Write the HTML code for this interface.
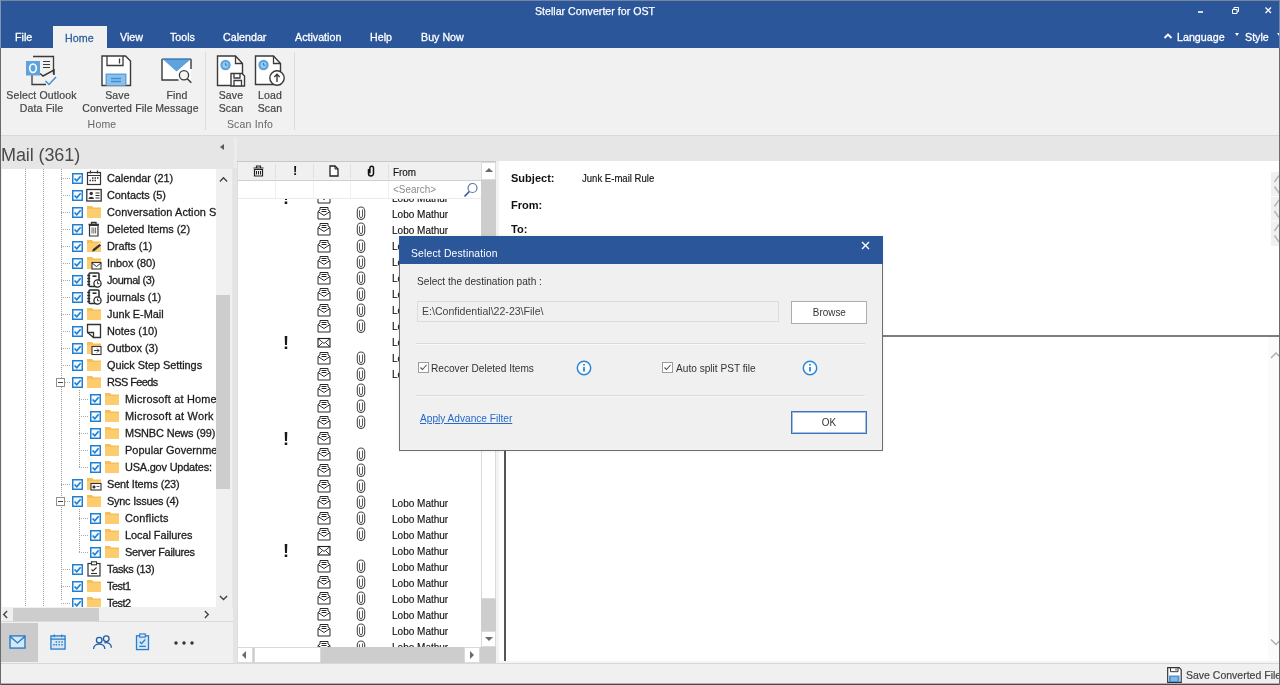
<!DOCTYPE html>
<html lang="en">
<head>
<meta charset="utf-8">
<title>Stellar Converter for OST</title>
<style>
*{box-sizing:border-box;margin:0;padding:0}
html,body{width:1280px;height:685px;overflow:hidden;background:#f0f0f0}
#app{will-change:transform}
body{font-family:"Liberation Sans","DejaVu Sans",sans-serif;font-size:12px;color:#222;position:relative}
.abs{position:absolute}
#app{position:absolute;left:0;top:0;width:1280px;height:685px;overflow:hidden;background:#e6e6e6}
/* title */
#title{position:absolute;left:0;top:0;width:1280px;height:48px;background:#2b569a;border-top:1px solid #76849c}
#title .cap{-webkit-text-stroke:.25px;position:absolute;left:0;width:1190px;top:3px;text-align:center;color:#fff;font-size:11.5px;line-height:14px;transform:scaleX(.925);transform-origin:595px 0}
.mtab{position:absolute;top:25px;height:23px;line-height:23px;color:#fff;font-size:11.500px;white-space:nowrap;transform:scaleX(.93);transform-origin:0 0;-webkit-text-stroke:.3px}
.mtab.sel{background:#f1f1f1;color:#30609f;text-align:center;transform:none}
.mtab.sel span{display:inline-block;transform:scaleX(.93)}
/* ribbon */
#ribbon{position:absolute;left:0;top:48px;width:1280px;height:88px;background:#f1f1f1;border-bottom:1px solid #d9d9d9}
.rsep{position:absolute;top:4px;height:78px;width:1px;background:#dcdcdc}
.rlab{position:absolute;text-align:center;color:#444;font-size:10.500px;line-height:12.500px;white-space:nowrap;letter-spacing:.15px;-webkit-text-stroke:.2px}
.rgrp{position:absolute;text-align:center;color:#666;font-size:10.500px;line-height:12px;top:70px;letter-spacing:.2px}
.ric{position:absolute}
/* left pane */
#lhead{position:absolute;left:0;top:136px;width:233px;height:33px;background:#e6e6e6}
#lhead .t{position:absolute;left:1px;top:6.500px;font-size:18px;line-height:24px;color:#4a4a4a;letter-spacing:-.1px}
#tree{position:absolute;left:2px;top:169px;width:214px;height:437.500px;background:#fff;overflow:hidden}
.vl{position:absolute;top:0;width:1px;height:438px;background-image:linear-gradient(#9a9a9a 50%,transparent 50%);background-size:1px 2px}
.tr{position:absolute;left:0;width:214px;height:17px}
.tr .hl{position:absolute;top:9px;height:1px;background-image:linear-gradient(90deg,#a8a8a8 50%,transparent 50%);background-size:2px 1px}
.tr .ex{position:absolute;top:5px;width:9px;height:9px;border:1px solid #919191;background:#fff}
.tr .ex:after{content:"";position:absolute;left:1px;top:3px;width:5px;height:1px;background:#444}
.cbw{position:absolute;top:4px;width:11px;height:11px}
.cb{width:11px;height:11px;display:block}
.tiw{position:absolute;top:1px;width:16px;height:16px}
.ti{width:16px;height:16px;display:block}
.tx{position:absolute;top:.5px;font-size:11.500px;line-height:16px;color:#1c1c1c;white-space:nowrap;letter-spacing:-.05px;-webkit-text-stroke:.3px;transform:scaleX(.95);transform-origin:0 0}
#tvs{position:absolute;left:216px;top:169px;width:16px;height:438px;background:#f0f0f0}
#tvs .th{position:absolute;left:0;top:126px;width:14px;height:194px;background:#cdcdcd}
#ths{position:absolute;left:2px;top:606.500px;width:214px;height:14.500px;background:#f0f0f0}
#ths .th{position:absolute;left:11px;top:1px;width:86px;height:13px;background:#cdcdcd}
.chev{position:absolute;font-size:0}
#nav{position:absolute;left:0;top:621px;width:233px;height:42px;background:#f0f0f0;border-top:1px solid #d9d9d9}
#nav .sel{position:absolute;left:1px;top:1px;width:37px;height:39px;background:#cbcbcb}
/* list */
#list{position:absolute;left:237px;top:162px;width:259px;height:501px;background:#fff;overflow:hidden;z-index:0}
#lhdr{position:absolute;left:0;top:0;width:244px;height:19px;background:#f0f0f0;border-bottom:1px solid #cfcfcf;z-index:3}
#lhdr i{position:absolute;top:2px;width:1px;height:14px;background:#e0e0e0}
#lsearch{position:absolute;left:0;top:19px;width:244px;height:18px;background:#fff;border-bottom:1px solid #ebebeb;z-index:3}
#lsearch i{position:absolute;top:0;width:1px;height:17px;background:#f0f0f0}
.lr{position:absolute;left:0;width:244px;height:16px}
.le{position:absolute;left:80px;top:1px;width:14px;height:14px}
.lc{position:absolute;left:119px;top:1px;width:10px;height:14px}
.ln{position:absolute;left:155px;top:.5px;line-height:16px;font-size:11px;color:#111;white-space:nowrap;transform:scaleX(.91);transform-origin:0 0;-webkit-text-stroke:.15px}
.bang{position:absolute;left:46px;top:1px;font-size:18px;line-height:16px;color:#1a1a1a;font-weight:bold}
#lvs{position:absolute;left:244px;top:0;width:15px;height:501px;background:#cdcdcd;z-index:4}
#lvs .b{position:absolute;left:0;width:15px;height:17px;background:#fff;border:1px solid #dadada}
#lvs .th{position:absolute;left:0;top:81px;width:15px;height:356px;background:#fff;border:1px solid #dadada}
#lhs{position:absolute;left:0;top:485px;width:244px;height:16px;background:#cdcdcd;z-index:4}
#lhs .b{position:absolute;top:0;width:16px;height:16px;background:#fff;border:1px solid #dadada}
#lhs .th{position:absolute;left:17px;top:0;width:67px;height:16px;background:#fff;border:1px solid #dadada}
.tri{position:absolute;width:0;height:0;border:4px solid transparent}
/* preview */
#pv{position:absolute;left:499px;top:161px;width:781px;height:500px;background:#fff;overflow:hidden}
#pv .lbl{position:absolute;left:12px;font-weight:bold;font-size:11.500px;color:#111;line-height:14px;transform:scaleX(.96);transform-origin:0 0}
#pv .val{position:absolute;left:83px;font-size:10.500px;color:#111;line-height:14px;-webkit-text-stroke:.15px;transform:scaleX(.91);transform-origin:0 0;white-space:nowrap}
#pvdiv{position:absolute;left:0;top:174px;width:781px;height:2px;background:#7d7d7d}
#pvl{position:absolute;left:5px;top:176px;width:2px;height:324px;background:#555}
/* status */
#status{position:absolute;left:0;top:663px;width:1280px;height:22px;background:#f0f0f0;border-top:1px solid #d8d8d8;border-bottom:1px solid #4a4a4a;box-shadow:inset 0 -1px 0 #b0b0b0}
#status .t{position:absolute;left:1186px;top:4px;font-size:10.500px;line-height:14px;color:#444;white-space:nowrap;-webkit-text-stroke:.2px}
/* dialog */
#dlg{z-index:10;position:absolute;left:399px;top:236px;width:484px;height:215px;background:#f0f0f0;border:1px solid #6e6e6e;border-top:none;box-shadow:0 0 3px rgba(0,0,0,.08)}
#dlg .tb{position:absolute;left:-1px;top:0;width:484px;height:28px;background:#2b569a}
#dlg .tb .t{position:absolute;left:12px;top:10px;color:#fff;font-size:11.500px;line-height:14px;letter-spacing:.2px;transform:scaleX(.9);transform-origin:0 0}
#dlg .x{position:absolute;left:462px;top:5px;width:9px;height:9px}
.dt{position:absolute;font-size:11px;line-height:14px;color:#333;white-space:nowrap;transform:scaleX(.92);transform-origin:0 0}
.btn{position:absolute;background:#fff;border:1px solid #adadad;text-align:center;font-size:11px;color:#333;line-height:21px}
.btn span{display:inline-block;transform:scaleX(.9)}
.dsep{position:absolute;left:16px;width:449px;height:1px;background:#dadada;border-bottom:1px solid #fafafa;box-sizing:content-box}
.dcb{position:absolute;width:11px;height:11px;border:1px solid #9c9c9c;background:#fdfdfd}
.info{position:absolute;width:16px;height:16px}
</style>
</head>
<body>
<div id="app">

<!-- ===== title bar ===== -->
<div id="title">
  <div class="cap">Stellar Converter for OST</div>
  <svg class="abs" style="left:1196px;top:4px" width="80" height="16" viewBox="0 0 80 16">
    <path d="M2 7h5" stroke="#fff" stroke-width="1.600"/>
    <path d="M36.500 4.500h4.500v4h-4.500zM38 4.500V2.500h4.500v4H41" fill="none" stroke="#fff" stroke-width="1"/>
    <path d="M69.500 2.500l5.500 5.500M75 2.500L69.500 8" stroke="#fff" stroke-width="1.300"/>
  </svg>
  <div class="mtab" style="left:15px">File</div>
  <div class="mtab sel" style="left:52.500px;width:54.500px;top:24.500px;height:23.500px;line-height:24px"><span>Home</span></div>
  <div class="mtab" style="left:120px">View</div>
  <div class="mtab" style="left:170px">Tools</div>
  <div class="mtab" style="left:223px">Calendar</div>
  <div class="mtab" style="left:295px">Activation</div>
  <div class="mtab" style="left:370px">Help</div>
  <div class="mtab" style="left:421px">Buy Now</div>
  <svg class="abs" style="left:1163px;top:31px" width="10" height="8" viewBox="0 0 10 8"><path d="M1.500 6l3.500-3.500L8.500 6" fill="none" stroke="#fff" stroke-width="1.800"/></svg>
  <div class="mtab" style="left:1177px">Language</div>
  <i class="tri" style="left:1234.500px;top:32px;border-width:3px 2.500px 0 2.500px;border-top-color:#fff"></i>
  <div class="mtab" style="left:1245px">Style</div>
  <i class="tri" style="left:1276.500px;top:32px;border-width:3px 2.500px 0 2.500px;border-top-color:#fff"></i>
</div>

<!-- ===== ribbon ===== -->
<div id="ribbon">
  <i class="rsep" style="left:205px"></i>
  <i class="rsep" style="left:294px"></i>

  <!-- Select Outlook Data File icon -->
  <svg class="ric" style="left:25px;top:7px" width="32" height="32" viewBox="0 0 32 32">
    <path d="M8 1.500h20.500v18" fill="none" stroke="#3a3a3a" stroke-width="1.300"/>
    <path d="M7 20v9.500h14" fill="none" stroke="#3a3a3a" stroke-width="1.300"/>
    <path d="M18 6.500h7M18 9.500h7M18 12.500h7" stroke="#3a3a3a" stroke-width="1.200"/>
    <path d="M15 18.500l3 2.500 11-6v5" fill="none" stroke="#3a3a3a" stroke-width="1.500"/>
    <rect x="1" y="6" width="14" height="14.500" fill="#5ea3dc"/>
    <ellipse cx="8" cy="13.200" rx="3.300" ry="4.200" fill="none" stroke="#fff" stroke-width="1.600"/>
    <path d="M20.500 26l3.500 3.500 7-7.500" fill="none" stroke="#3f8fd2" stroke-width="1.500"/>
  </svg>
  <div class="rlab" style="left:0;top:41px;width:83px">Select Outlook<br>Data File</div>

  <!-- Save Converted File icon -->
  <svg class="ric" style="left:101px;top:7px" width="31" height="32" viewBox="0 0 31 32">
    <path d="M1 1h23.500l5 5v24.500H1z" fill="#fff" stroke="#3a3a3a" stroke-width="1.400"/>
    <path d="M6 1v9.500h16V1" fill="none" stroke="#3a3a3a" stroke-width="1.300"/>
    <path d="M18.500 3.500v5" stroke="#3a3a3a" stroke-width="1.300"/>
    <rect x="4.500" y="18.500" width="21" height="12" fill="#5ea3dc"/>
    <rect x="6" y="20" width="18" height="10.500" fill="#8cc0ea"/>
    <path d="M10 23.500h10M10 26.500h10" stroke="#3f8fd2" stroke-width="1.300"/>
  </svg>
  <div class="rlab" style="left:76px;top:41px;width:83px">Save<br>Converted File</div>

  <!-- Find Message icon -->
  <svg class="ric" style="left:161px;top:9px" width="33" height="28" viewBox="0 0 33 28">
    <path d="M1 2h29v21H1z" fill="#fff"/>
    <path d="M1.500 2l14 12.500L30 2z" fill="#5ea3dc"/>
    <path d="M30 2v10M1 2v21h16.500" fill="none" stroke="#3a3a3a" stroke-width="1.400"/>
    <path d="M1 2h29" stroke="#3a76b4" stroke-width="1.400"/>
    <circle cx="23" cy="18.300" r="4.600" fill="#f6f6f6" stroke="#3a3a3a" stroke-width="1.300"/>
    <path d="M26.300 21.800l4 4" stroke="#3a3a3a" stroke-width="1.500"/>
  </svg>
  <div class="rlab" style="left:152px;top:41px;width:50px">Find<br>Message</div>

  <!-- Save Scan icon -->
  <svg class="ric" style="left:216px;top:7px" width="30" height="32" viewBox="0 0 30 32">
    <path d="M1.500 1h18l7 7.500V30.500H1.500z" fill="#fff" stroke="#3a3a3a" stroke-width="1.400"/>
    <path d="M19.500 1v7.500h7" fill="none" stroke="#3a3a3a" stroke-width="1.300"/>
    <circle cx="9.500" cy="10" r="5.200" fill="#5ea3dc"/>
    <circle cx="9.500" cy="10" r="3" fill="#9accf0"/>
    <path d="M9.500 8v2.200h2" fill="none" stroke="#2f7cc0" stroke-width="1"/>
    <path d="M15 18.500h11l2.500 2.500V31H15z" fill="#fff" stroke="#3a3a3a" stroke-width="1.400"/>
    <path d="M18 18.500v4.500h6v-4.500M18 31v-5.500h7.500V31" fill="none" stroke="#3a3a3a" stroke-width="1.300"/>
  </svg>
  <div class="rlab" style="left:213px;top:41px;width:36px">Save<br>Scan</div>

  <!-- Load Scan icon -->
  <svg class="ric" style="left:254px;top:7px" width="32" height="32" viewBox="0 0 32 32">
    <path d="M1.500 1h18l7 7.500V29.500H1.500z" fill="#fff" stroke="#3a3a3a" stroke-width="1.400"/>
    <path d="M19.500 1v7.500h7" fill="none" stroke="#3a3a3a" stroke-width="1.300"/>
    <circle cx="9.500" cy="10" r="5.200" fill="#5ea3dc"/>
    <circle cx="9.500" cy="10" r="3" fill="#9accf0"/>
    <path d="M9.500 8v2.200h2" fill="none" stroke="#2f7cc0" stroke-width="1"/>
    <circle cx="23" cy="23" r="7.200" fill="#fff" stroke="#3a3a3a" stroke-width="1.400"/>
    <path d="M23 27v-7.500M20.300 22l2.700-2.700 2.700 2.700" fill="none" stroke="#3a3a3a" stroke-width="1.400"/>
  </svg>
  <div class="rlab" style="left:252px;top:41px;width:36px">Load<br>Scan</div>

  <div class="rgrp" style="left:72px;width:60px">Home</div>
  <div class="rgrp" style="left:215px;width:70px">Scan Info</div>
</div>

<!-- ===== left pane ===== -->
<div id="lhead"><div class="t">Mail (361)</div>
  <i class="tri" style="left:220px;top:8px;border-width:3.500px 4px 3.500px 0;border-right-color:#5a5a5a"></i>
</div>
<div class="abs" style="left:0;top:169px;width:2px;height:494px;background:#f0f0f0"></div>
<div id="tree">
  <i class="vl" style="left:23px"></i>
  <i class="vl" style="left:41px"></i>
  <i class="vl" style="left:59px;height:432px"></i>
  <i class="vl" style="left:77px;top:221px;height:77px"></i>
  <i class="vl" style="left:77px;top:340px;height:43px"></i>
<div class="tr" style="top:0px"><i class="hl" style="left:59px;width:10px"></i><span style="left:70px" class="cbw"><svg class="cb" viewBox="0 0 12 12"><rect x="0.800" y="0.800" width="10.400" height="10.400" fill="#f4faff" stroke="#1e7fd0" stroke-width="1.600"/><path d="M2.800 6l2.400 2.500 4.200-5" fill="none" stroke="#1e7fd0" stroke-width="1.800"/></svg></span><span style="left:84px" class="tiw"><svg class="ti" viewBox="0 0 16 16"><rect x="1.5" y="2.5" width="13" height="12" fill="#fff" stroke="#333" stroke-width="1.2"/><path d="M4.5 0.5v3M11.5 0.5v3" stroke="#333" stroke-width="1.2"/><path d="M1.5 5.5h13" stroke="#333" stroke-width="1"/><path d="M6 8h1.5M8.5 8H10M11 8h1.5M3.500 10.500h1.5M6 10.500h1.5M8.500 10.500H10" stroke="#333" stroke-width="1.4"/></svg></span><span class="tx" style="left:105px">Calendar (21)</span></div>
<div class="tr" style="top:17px"><i class="hl" style="left:59px;width:10px"></i><span style="left:70px" class="cbw"><svg class="cb" viewBox="0 0 12 12"><rect x="0.800" y="0.800" width="10.400" height="10.400" fill="#f4faff" stroke="#1e7fd0" stroke-width="1.600"/><path d="M2.800 6l2.400 2.500 4.200-5" fill="none" stroke="#1e7fd0" stroke-width="1.800"/></svg></span><span style="left:84px" class="tiw"><svg class="ti" viewBox="0 0 16 16"><rect x="0.800" y="2.500" width="14.400" height="11.500" fill="#fff" stroke="#333" stroke-width="1.300"/><circle cx="5.200" cy="6.500" r="1.700" fill="#333"/><path d="M2.500 12c0-3 5.400-3 5.400 0z" fill="#333"/><path d="M9.500 6h4M9.500 8.500h4M9.500 11h4" stroke="#333" stroke-width="1.100"/></svg></span><span class="tx" style="left:105px">Contacts (5)</span></div>
<div class="tr" style="top:34px"><i class="hl" style="left:59px;width:10px"></i><span style="left:70px" class="cbw"><svg class="cb" viewBox="0 0 12 12"><rect x="0.800" y="0.800" width="10.400" height="10.400" fill="#f4faff" stroke="#1e7fd0" stroke-width="1.600"/><path d="M2.800 6l2.400 2.500 4.200-5" fill="none" stroke="#1e7fd0" stroke-width="1.800"/></svg></span><span style="left:84px" class="tiw"><svg class="ti" viewBox="0 0 16 16"><path d="M1 2h5l1.5 1.5H15V14H1z" fill="#f6bf58"/><path d="M1 5h14v9H1z" fill="#fccc6e"/></svg></span><span class="tx" style="left:105px;letter-spacing:0.10px">Conversation Action Settings</span></div>
<div class="tr" style="top:51px"><i class="hl" style="left:59px;width:10px"></i><span style="left:70px" class="cbw"><svg class="cb" viewBox="0 0 12 12"><rect x="0.800" y="0.800" width="10.400" height="10.400" fill="#f4faff" stroke="#1e7fd0" stroke-width="1.600"/><path d="M2.800 6l2.400 2.500 4.200-5" fill="none" stroke="#1e7fd0" stroke-width="1.800"/></svg></span><span style="left:84px" class="tiw"><svg class="ti" viewBox="0 0 16 16"><path d="M3.500 4.500h8.500v10.500H3.500z" fill="#fff" stroke="#333" stroke-width="1.200"/><path d="M2.500 3.500h10.500M5.500 3.500V1.500h4.500v2" fill="none" stroke="#333" stroke-width="1.300"/><path d="M6 6.500v6M7.800 6.500v6M9.600 6.500v6" stroke="#444" stroke-width="0.800"/></svg></span><span class="tx" style="left:105px">Deleted Items (2)</span></div>
<div class="tr" style="top:68px"><i class="hl" style="left:59px;width:10px"></i><span style="left:70px" class="cbw"><svg class="cb" viewBox="0 0 12 12"><rect x="0.800" y="0.800" width="10.400" height="10.400" fill="#f4faff" stroke="#1e7fd0" stroke-width="1.600"/><path d="M2.800 6l2.400 2.500 4.200-5" fill="none" stroke="#1e7fd0" stroke-width="1.800"/></svg></span><span style="left:84px" class="tiw"><svg class="ti" viewBox="0 0 16 16"><path d="M1 2h5l1.500 1.500H15V14H1z" fill="#f6bf58"/><path d="M1 5h14v9H1z" fill="#fccc6e"/><path d="M6 13.500l1-2.500 6.500-5 1.500 1.500-6.500 5.500z" fill="#333"/><path d="M11.500 6.500l2-2 1.500 1.500" fill="none" stroke="#fff" stroke-width="0.600"/></svg></span><span class="tx" style="left:105px">Drafts (1)</span></div>
<div class="tr" style="top:85px"><i class="hl" style="left:59px;width:10px"></i><span style="left:70px" class="cbw"><svg class="cb" viewBox="0 0 12 12"><rect x="0.800" y="0.800" width="10.400" height="10.400" fill="#f4faff" stroke="#1e7fd0" stroke-width="1.600"/><path d="M2.800 6l2.400 2.500 4.200-5" fill="none" stroke="#1e7fd0" stroke-width="1.800"/></svg></span><span style="left:84px" class="tiw"><svg class="ti" viewBox="0 0 16 16"><path d="M1 2h5l1.500 1.500H15V14H1z" fill="#f6bf58"/><path d="M1 5h14v9H1z" fill="#fccc6e"/><rect x="6" y="7.500" width="9" height="6.500" fill="#fff" stroke="#333" stroke-width="1.100"/><path d="M6 8l4.500 3.500L15 8" fill="none" stroke="#333" stroke-width="1"/></svg></span><span class="tx" style="left:105px">Inbox (80)</span></div>
<div class="tr" style="top:102px"><i class="hl" style="left:59px;width:10px"></i><span style="left:70px" class="cbw"><svg class="cb" viewBox="0 0 12 12"><rect x="0.800" y="0.800" width="10.400" height="10.400" fill="#f4faff" stroke="#1e7fd0" stroke-width="1.600"/><path d="M2.800 6l2.400 2.500 4.200-5" fill="none" stroke="#1e7fd0" stroke-width="1.800"/></svg></span><span style="left:84px" class="tiw"><svg class="ti" viewBox="0 0 16 16"><rect x="3" y="1" width="10" height="13.500" rx="1" fill="#fff" stroke="#2a2a2a" stroke-width="1.500"/><path d="M1.200 3.500h3M1.200 6.500h3M1.200 9.500h3M1.200 12.500h3" stroke="#2a2a2a" stroke-width="1.300"/><path d="M6.500 4.200h4" stroke="#2a2a2a" stroke-width="1.600"/><circle cx="11.500" cy="11.500" r="3.600" fill="#fff" stroke="#2a2a2a" stroke-width="1.300"/><path d="M11.500 9.500v2.200h1.800" fill="none" stroke="#333" stroke-width="1"/></svg></span><span class="tx" style="left:105px;letter-spacing:-0.45px">Journal (3)</span></div>
<div class="tr" style="top:119px"><i class="hl" style="left:59px;width:10px"></i><span style="left:70px" class="cbw"><svg class="cb" viewBox="0 0 12 12"><rect x="0.800" y="0.800" width="10.400" height="10.400" fill="#f4faff" stroke="#1e7fd0" stroke-width="1.600"/><path d="M2.800 6l2.400 2.500 4.200-5" fill="none" stroke="#1e7fd0" stroke-width="1.800"/></svg></span><span style="left:84px" class="tiw"><svg class="ti" viewBox="0 0 16 16"><rect x="3" y="1" width="10" height="13.500" rx="1" fill="#fff" stroke="#2a2a2a" stroke-width="1.500"/><path d="M1.200 3.500h3M1.200 6.500h3M1.200 9.500h3M1.200 12.500h3" stroke="#2a2a2a" stroke-width="1.300"/><path d="M6.500 4.200h4" stroke="#2a2a2a" stroke-width="1.600"/><circle cx="11.500" cy="11.500" r="3.600" fill="#fff" stroke="#2a2a2a" stroke-width="1.300"/><path d="M11.500 9.500v2.200h1.800" fill="none" stroke="#333" stroke-width="1"/></svg></span><span class="tx" style="left:105px">journals (1)</span></div>
<div class="tr" style="top:136px"><i class="hl" style="left:59px;width:10px"></i><span style="left:70px" class="cbw"><svg class="cb" viewBox="0 0 12 12"><rect x="0.800" y="0.800" width="10.400" height="10.400" fill="#f4faff" stroke="#1e7fd0" stroke-width="1.600"/><path d="M2.800 6l2.400 2.500 4.200-5" fill="none" stroke="#1e7fd0" stroke-width="1.800"/></svg></span><span style="left:84px" class="tiw"><svg class="ti" viewBox="0 0 16 16"><path d="M1 2h5l1.5 1.5H15V14H1z" fill="#f6bf58"/><path d="M1 5h14v9H1z" fill="#fccc6e"/></svg></span><span class="tx" style="left:105px">Junk E-Mail</span></div>
<div class="tr" style="top:153px"><i class="hl" style="left:59px;width:10px"></i><span style="left:70px" class="cbw"><svg class="cb" viewBox="0 0 12 12"><rect x="0.800" y="0.800" width="10.400" height="10.400" fill="#f4faff" stroke="#1e7fd0" stroke-width="1.600"/><path d="M2.800 6l2.400 2.500 4.200-5" fill="none" stroke="#1e7fd0" stroke-width="1.800"/></svg></span><span style="left:84px" class="tiw"><svg class="ti" viewBox="0 0 16 16"><path d="M1.500 1.500h13v13h-7l-6-5z" fill="#fff" stroke="#333" stroke-width="1.300"/><path d="M1.500 9.500h6v5" fill="none" stroke="#333" stroke-width="1.300"/></svg></span><span class="tx" style="left:105px">Notes (10)</span></div>
<div class="tr" style="top:170px"><i class="hl" style="left:59px;width:10px"></i><span style="left:70px" class="cbw"><svg class="cb" viewBox="0 0 12 12"><rect x="0.800" y="0.800" width="10.400" height="10.400" fill="#f4faff" stroke="#1e7fd0" stroke-width="1.600"/><path d="M2.800 6l2.400 2.500 4.200-5" fill="none" stroke="#1e7fd0" stroke-width="1.800"/></svg></span><span style="left:84px" class="tiw"><svg class="ti" viewBox="0 0 16 16"><path d="M1 2h5l1.500 1.500H15V14H1z" fill="#f6bf58"/><path d="M1 5h14v9H1z" fill="#fccc6e"/><rect x="6" y="6.500" width="9" height="8" fill="#fff" stroke="#333" stroke-width="1.100"/><path d="M8 10.500h5M11 8.500l2 2-2 2" fill="none" stroke="#333" stroke-width="1"/></svg></span><span class="tx" style="left:105px">Outbox (3)</span></div>
<div class="tr" style="top:187px"><i class="hl" style="left:59px;width:10px"></i><span style="left:70px" class="cbw"><svg class="cb" viewBox="0 0 12 12"><rect x="0.800" y="0.800" width="10.400" height="10.400" fill="#f4faff" stroke="#1e7fd0" stroke-width="1.600"/><path d="M2.800 6l2.400 2.500 4.200-5" fill="none" stroke="#1e7fd0" stroke-width="1.800"/></svg></span><span style="left:84px" class="tiw"><svg class="ti" viewBox="0 0 16 16"><path d="M1 2h5l1.5 1.5H15V14H1z" fill="#f6bf58"/><path d="M1 5h14v9H1z" fill="#fccc6e"/></svg></span><span class="tx" style="left:105px">Quick Step Settings</span></div>
<div class="tr" style="top:204px"><i class="hl" style="left:59px;width:10px"></i><i class="ex" style="left:54px"></i><span style="left:70px" class="cbw"><svg class="cb" viewBox="0 0 12 12"><rect x="0.800" y="0.800" width="10.400" height="10.400" fill="#f4faff" stroke="#1e7fd0" stroke-width="1.600"/><path d="M2.800 6l2.400 2.500 4.200-5" fill="none" stroke="#1e7fd0" stroke-width="1.800"/></svg></span><span style="left:84px" class="tiw"><svg class="ti" viewBox="0 0 16 16"><path d="M1 2h5l1.5 1.5H15V14H1z" fill="#f6bf58"/><path d="M1 5h14v9H1z" fill="#fccc6e"/></svg></span><span class="tx" style="left:105px;letter-spacing:-0.60px">RSS Feeds</span></div>
<div class="tr" style="top:221px"><i class="hl" style="left:77px;width:10px"></i><span style="left:88px" class="cbw"><svg class="cb" viewBox="0 0 12 12"><rect x="0.800" y="0.800" width="10.400" height="10.400" fill="#f4faff" stroke="#1e7fd0" stroke-width="1.600"/><path d="M2.800 6l2.400 2.500 4.200-5" fill="none" stroke="#1e7fd0" stroke-width="1.800"/></svg></span><span style="left:102px" class="tiw"><svg class="ti" viewBox="0 0 16 16"><path d="M1 2h5l1.5 1.5H15V14H1z" fill="#f6bf58"/><path d="M1 5h14v9H1z" fill="#fccc6e"/></svg></span><span class="tx" style="left:123px;letter-spacing:0.20px">Microsoft at Home</span></div>
<div class="tr" style="top:238px"><i class="hl" style="left:77px;width:10px"></i><span style="left:88px" class="cbw"><svg class="cb" viewBox="0 0 12 12"><rect x="0.800" y="0.800" width="10.400" height="10.400" fill="#f4faff" stroke="#1e7fd0" stroke-width="1.600"/><path d="M2.800 6l2.400 2.500 4.200-5" fill="none" stroke="#1e7fd0" stroke-width="1.800"/></svg></span><span style="left:102px" class="tiw"><svg class="ti" viewBox="0 0 16 16"><path d="M1 2h5l1.5 1.5H15V14H1z" fill="#f6bf58"/><path d="M1 5h14v9H1z" fill="#fccc6e"/></svg></span><span class="tx" style="left:123px;letter-spacing:0.25px">Microsoft at Work</span></div>
<div class="tr" style="top:255px"><i class="hl" style="left:77px;width:10px"></i><span style="left:88px" class="cbw"><svg class="cb" viewBox="0 0 12 12"><rect x="0.800" y="0.800" width="10.400" height="10.400" fill="#f4faff" stroke="#1e7fd0" stroke-width="1.600"/><path d="M2.800 6l2.400 2.500 4.200-5" fill="none" stroke="#1e7fd0" stroke-width="1.800"/></svg></span><span style="left:102px" class="tiw"><svg class="ti" viewBox="0 0 16 16"><path d="M1 2h5l1.5 1.5H15V14H1z" fill="#f6bf58"/><path d="M1 5h14v9H1z" fill="#fccc6e"/></svg></span><span class="tx" style="left:123px;letter-spacing:-0.15px">MSNBC News (99)</span></div>
<div class="tr" style="top:272px"><i class="hl" style="left:77px;width:10px"></i><span style="left:88px" class="cbw"><svg class="cb" viewBox="0 0 12 12"><rect x="0.800" y="0.800" width="10.400" height="10.400" fill="#f4faff" stroke="#1e7fd0" stroke-width="1.600"/><path d="M2.800 6l2.400 2.500 4.200-5" fill="none" stroke="#1e7fd0" stroke-width="1.800"/></svg></span><span style="left:102px" class="tiw"><svg class="ti" viewBox="0 0 16 16"><path d="M1 2h5l1.5 1.5H15V14H1z" fill="#f6bf58"/><path d="M1 5h14v9H1z" fill="#fccc6e"/></svg></span><span class="tx" style="left:123px;letter-spacing:0.05px">Popular Government Questions</span></div>
<div class="tr" style="top:289px"><i class="hl" style="left:77px;width:10px"></i><span style="left:88px" class="cbw"><svg class="cb" viewBox="0 0 12 12"><rect x="0.800" y="0.800" width="10.400" height="10.400" fill="#f4faff" stroke="#1e7fd0" stroke-width="1.600"/><path d="M2.800 6l2.400 2.500 4.200-5" fill="none" stroke="#1e7fd0" stroke-width="1.800"/></svg></span><span style="left:102px" class="tiw"><svg class="ti" viewBox="0 0 16 16"><path d="M1 2h5l1.5 1.5H15V14H1z" fill="#f6bf58"/><path d="M1 5h14v9H1z" fill="#fccc6e"/></svg></span><span class="tx" style="left:123px;letter-spacing:-0.20px">USA.gov Updates:</span></div>
<div class="tr" style="top:306px"><i class="hl" style="left:59px;width:10px"></i><span style="left:70px" class="cbw"><svg class="cb" viewBox="0 0 12 12"><rect x="0.800" y="0.800" width="10.400" height="10.400" fill="#f4faff" stroke="#1e7fd0" stroke-width="1.600"/><path d="M2.800 6l2.400 2.500 4.200-5" fill="none" stroke="#1e7fd0" stroke-width="1.800"/></svg></span><span style="left:84px" class="tiw"><svg class="ti" viewBox="0 0 16 16"><path d="M1 2h5l1.500 1.500H15V14H1z" fill="#f6bf58"/><path d="M1 5h14v9H1z" fill="#fccc6e"/><rect x="5" y="7.500" width="10" height="6.500" fill="#fff" stroke="#333" stroke-width="1.100"/><path d="M7 10h2v2H7zM10.500 10.500h3" fill="#333" stroke="#333" stroke-width="0.800"/></svg></span><span class="tx" style="left:105px;letter-spacing:-0.15px">Sent Items (23)</span></div>
<div class="tr" style="top:323px"><i class="hl" style="left:59px;width:10px"></i><i class="ex" style="left:54px"></i><span style="left:70px" class="cbw"><svg class="cb" viewBox="0 0 12 12"><rect x="0.800" y="0.800" width="10.400" height="10.400" fill="#f4faff" stroke="#1e7fd0" stroke-width="1.600"/><path d="M2.800 6l2.400 2.500 4.200-5" fill="none" stroke="#1e7fd0" stroke-width="1.800"/></svg></span><span style="left:84px" class="tiw"><svg class="ti" viewBox="0 0 16 16"><path d="M1 2h5l1.5 1.5H15V14H1z" fill="#f6bf58"/><path d="M1 5h14v9H1z" fill="#fccc6e"/></svg></span><span class="tx" style="left:105px;letter-spacing:-0.25px">Sync Issues (4)</span></div>
<div class="tr" style="top:340px"><i class="hl" style="left:77px;width:10px"></i><span style="left:88px" class="cbw"><svg class="cb" viewBox="0 0 12 12"><rect x="0.800" y="0.800" width="10.400" height="10.400" fill="#f4faff" stroke="#1e7fd0" stroke-width="1.600"/><path d="M2.800 6l2.400 2.500 4.200-5" fill="none" stroke="#1e7fd0" stroke-width="1.800"/></svg></span><span style="left:102px" class="tiw"><svg class="ti" viewBox="0 0 16 16"><path d="M1 2h5l1.5 1.5H15V14H1z" fill="#f6bf58"/><path d="M1 5h14v9H1z" fill="#fccc6e"/></svg></span><span class="tx" style="left:123px;letter-spacing:0.20px">Conflicts</span></div>
<div class="tr" style="top:357px"><i class="hl" style="left:77px;width:10px"></i><span style="left:88px" class="cbw"><svg class="cb" viewBox="0 0 12 12"><rect x="0.800" y="0.800" width="10.400" height="10.400" fill="#f4faff" stroke="#1e7fd0" stroke-width="1.600"/><path d="M2.800 6l2.400 2.500 4.200-5" fill="none" stroke="#1e7fd0" stroke-width="1.800"/></svg></span><span style="left:102px" class="tiw"><svg class="ti" viewBox="0 0 16 16"><path d="M1 2h5l1.5 1.5H15V14H1z" fill="#f6bf58"/><path d="M1 5h14v9H1z" fill="#fccc6e"/></svg></span><span class="tx" style="left:123px">Local Failures</span></div>
<div class="tr" style="top:374px"><i class="hl" style="left:77px;width:10px"></i><span style="left:88px" class="cbw"><svg class="cb" viewBox="0 0 12 12"><rect x="0.800" y="0.800" width="10.400" height="10.400" fill="#f4faff" stroke="#1e7fd0" stroke-width="1.600"/><path d="M2.800 6l2.400 2.500 4.200-5" fill="none" stroke="#1e7fd0" stroke-width="1.800"/></svg></span><span style="left:102px" class="tiw"><svg class="ti" viewBox="0 0 16 16"><path d="M1 2h5l1.5 1.5H15V14H1z" fill="#f6bf58"/><path d="M1 5h14v9H1z" fill="#fccc6e"/></svg></span><span class="tx" style="left:123px;letter-spacing:-0.30px">Server Failures</span></div>
<div class="tr" style="top:391px"><i class="hl" style="left:59px;width:10px"></i><span style="left:70px" class="cbw"><svg class="cb" viewBox="0 0 12 12"><rect x="0.800" y="0.800" width="10.400" height="10.400" fill="#f4faff" stroke="#1e7fd0" stroke-width="1.600"/><path d="M2.800 6l2.400 2.500 4.200-5" fill="none" stroke="#1e7fd0" stroke-width="1.800"/></svg></span><span style="left:84px" class="tiw"><svg class="ti" viewBox="0 0 16 16"><rect x="2" y="2.500" width="12" height="12.500" fill="#fff" stroke="#333" stroke-width="1.200"/><rect x="5.500" y="0.800" width="5" height="3" fill="#fff" stroke="#333" stroke-width="1.100"/><path d="M5.500 8.500l1.500 1.500 3.500-3.500" fill="none" stroke="#333" stroke-width="1.100"/><path d="M5 12.500h6" stroke="#333" stroke-width="1.100"/></svg></span><span class="tx" style="left:105px;letter-spacing:-0.32px">Tasks (13)</span></div>
<div class="tr" style="top:408px"><i class="hl" style="left:59px;width:10px"></i><span style="left:70px" class="cbw"><svg class="cb" viewBox="0 0 12 12"><rect x="0.800" y="0.800" width="10.400" height="10.400" fill="#f4faff" stroke="#1e7fd0" stroke-width="1.600"/><path d="M2.800 6l2.400 2.500 4.200-5" fill="none" stroke="#1e7fd0" stroke-width="1.800"/></svg></span><span style="left:84px" class="tiw"><svg class="ti" viewBox="0 0 16 16"><path d="M1 2h5l1.5 1.5H15V14H1z" fill="#f6bf58"/><path d="M1 5h14v9H1z" fill="#fccc6e"/></svg></span><span class="tx" style="left:105px;letter-spacing:-0.55px">Test1</span></div>
<div class="tr" style="top:425px"><i class="hl" style="left:59px;width:10px"></i><span style="left:70px" class="cbw"><svg class="cb" viewBox="0 0 12 12"><rect x="0.800" y="0.800" width="10.400" height="10.400" fill="#f4faff" stroke="#1e7fd0" stroke-width="1.600"/><path d="M2.800 6l2.400 2.500 4.200-5" fill="none" stroke="#1e7fd0" stroke-width="1.800"/></svg></span><span style="left:84px" class="tiw"><svg class="ti" viewBox="0 0 16 16"><path d="M1 2h5l1.5 1.5H15V14H1z" fill="#f6bf58"/><path d="M1 5h14v9H1z" fill="#fccc6e"/></svg></span><span class="tx" style="left:105px;letter-spacing:-0.55px">Test2</span></div>
</div>
<div id="tvs"><div class="th"></div>
  <svg class="abs" style="left:2.500px;top:6.500px" width="9" height="6.300" viewBox="0 0 10 7"><path d="M1 6l4-4 4 4" fill="none" stroke="#444" stroke-width="1.600"/></svg>
  <svg class="abs" style="left:2.500px;top:426px" width="9" height="6.300" viewBox="0 0 10 7"><path d="M1 1l4 4 4-4" fill="none" stroke="#444" stroke-width="1.600"/></svg>
</div>
<div id="ths"><div class="th"></div>
  <svg class="abs" style="left:0px;top:3px" width="6" height="9" viewBox="0 0 7 10"><path d="M6 1L2 5l4 4" fill="none" stroke="#444" stroke-width="1.600"/></svg>
  <svg class="abs" style="left:202px;top:3px" width="6" height="9" viewBox="0 0 7 10"><path d="M1 1l4 4-4 4" fill="none" stroke="#444" stroke-width="1.600"/></svg>
</div>
<div class="abs" style="left:216px;top:607px;width:17px;height:14px;background:#f0f0f0"></div>
<div id="nav">
  <div class="sel"></div>
  <!-- mail -->
  <svg class="abs" style="left:8.500px;top:12.500px" width="17" height="14" viewBox="0 0 18 15"><rect x="1" y="1" width="16" height="13" fill="#d6e8f8" stroke="#2a7bc8" stroke-width="1.500"/><path d="M1 1.500l8 7 8-7" fill="none" stroke="#2a7bc8" stroke-width="1.500"/></svg>
  <!-- calendar -->
  <svg class="abs" style="left:50px;top:12px" width="16" height="16" viewBox="0 0 17 17"><rect x="1" y="2" width="15" height="14" fill="#d6e8f8" stroke="#2a7bc8" stroke-width="1.400"/><path d="M1 5.500h15M4.500 0.500v3M12.500 0.500v3" stroke="#2a7bc8" stroke-width="1.300"/><path d="M6 8.500h1.500M9 8.500h1.500M12 8.500h1.500M3.500 11.500H5M6 11.500h1.500M9 11.500h1.500M12 11.500h1.500" stroke="#2a7bc8" stroke-width="1.600"/></svg>
  <!-- people -->
  <svg class="abs" style="left:92px;top:12.500px" width="21" height="15" viewBox="0 0 22 16"><circle cx="7.500" cy="5.500" r="3" fill="none" stroke="#1f5fa8" stroke-width="1.400"/><path d="M1.500 15c0-7 12-7 12 0" fill="none" stroke="#1f5fa8" stroke-width="1.400"/><circle cx="15" cy="4" r="3" fill="none" stroke="#1f5fa8" stroke-width="1.400"/><path d="M13 8.500c4-1 7.500 1 7.500 5" fill="none" stroke="#1f5fa8" stroke-width="1.400"/></svg>
  <!-- tasks -->
  <svg class="abs" style="left:134.500px;top:11px" width="15" height="17.500" viewBox="0 0 16 19"><rect x="1.500" y="3" width="13" height="15" fill="#d6e8f8" stroke="#2a7bc8" stroke-width="1.400"/><rect x="5" y="1" width="6" height="3.500" fill="#d6e8f8" stroke="#2a7bc8" stroke-width="1.200"/><path d="M5 9.500l2 2 4-4.500" fill="none" stroke="#2a7bc8" stroke-width="1.400"/><path d="M4.500 14.500h7" stroke="#2a7bc8" stroke-width="1.400"/></svg>
  <!-- dots -->
  <svg class="abs" style="left:173px;top:17.500px" width="22" height="6" viewBox="0 0 22 6"><circle cx="3" cy="3" r="1.700" fill="#333"/><circle cx="11" cy="3" r="1.700" fill="#333"/><circle cx="19" cy="3" r="1.700" fill="#333"/></svg>
</div>
<!-- splitter between left pane and list -->
<div class="abs" style="left:233px;top:168px;width:4px;height:495px;background:#e4e4e4"></div>
<div class="abs" style="left:234px;top:137px;width:3px;height:31px;background:#ececec"></div>

<!-- ===== list ===== -->
<div class="abs" style="left:237px;top:162px;width:1px;height:501px;background:#dedede;z-index:1"></div>
<div class="abs" style="left:237px;top:161px;width:259px;height:1px;background:#c8c8c8"></div>
<div id="list">
<div class="lr" style="top:27.40px"><b class="bang">!</b><svg class="le" viewBox="0 0 14 14"><path d="M1 5.500L3 4V1.500h8V4l2 1.500V13H1z" fill="#fff" stroke="#2a2a2a" stroke-width="1"/><path d="M1 5.500l6 4 6-4" fill="none" stroke="#2a2a2a" stroke-width="1"/><path d="M4.500 3.500h5M4.500 5.500h5" stroke="#222" stroke-width="1"/></svg><span class="ln">Lobo Mathur</span></div>
<div class="lr" style="top:43.44px"><svg class="le" viewBox="0 0 14 14"><path d="M1 5.500L3 4V1.500h8V4l2 1.500V13H1z" fill="#fff" stroke="#2a2a2a" stroke-width="1"/><path d="M1 5.500l6 4 6-4" fill="none" stroke="#2a2a2a" stroke-width="1"/><path d="M4.500 3.500h5M4.500 5.500h5" stroke="#222" stroke-width="1"/></svg><svg class="lc" viewBox="0 0 10 14"><rect x="1.300" y="1" width="7.400" height="12.400" rx="3.700" fill="#fff" stroke="#4a4a4a" stroke-width="1.100"/><path d="M3.500 4.300v5.800a1.500 1.500 0 0 0 3 0V3.500" fill="none" stroke="#5a5a5a" stroke-width="1"/></svg><span class="ln">Lobo Mathur</span></div>
<div class="lr" style="top:59.48px"><svg class="le" viewBox="0 0 14 14"><path d="M1 5.500L3 4V1.500h8V4l2 1.500V13H1z" fill="#fff" stroke="#2a2a2a" stroke-width="1"/><path d="M1 5.500l6 4 6-4" fill="none" stroke="#2a2a2a" stroke-width="1"/><path d="M4.500 3.500h5M4.500 5.500h5" stroke="#222" stroke-width="1"/></svg><svg class="lc" viewBox="0 0 10 14"><rect x="1.300" y="1" width="7.400" height="12.400" rx="3.700" fill="#fff" stroke="#4a4a4a" stroke-width="1.100"/><path d="M3.500 4.300v5.800a1.500 1.500 0 0 0 3 0V3.500" fill="none" stroke="#5a5a5a" stroke-width="1"/></svg><span class="ln">Lobo Mathur</span></div>
<div class="lr" style="top:75.52px"><svg class="le" viewBox="0 0 14 14"><path d="M1 5.500L3 4V1.500h8V4l2 1.500V13H1z" fill="#fff" stroke="#2a2a2a" stroke-width="1"/><path d="M1 5.500l6 4 6-4" fill="none" stroke="#2a2a2a" stroke-width="1"/><path d="M4.500 3.500h5M4.500 5.500h5" stroke="#222" stroke-width="1"/></svg><svg class="lc" viewBox="0 0 10 14"><rect x="1.300" y="1" width="7.400" height="12.400" rx="3.700" fill="#fff" stroke="#4a4a4a" stroke-width="1.100"/><path d="M3.500 4.300v5.800a1.500 1.500 0 0 0 3 0V3.500" fill="none" stroke="#5a5a5a" stroke-width="1"/></svg><span class="ln">Lobo Mathur</span></div>
<div class="lr" style="top:91.56px"><svg class="le" viewBox="0 0 14 14"><path d="M1 5.500L3 4V1.500h8V4l2 1.500V13H1z" fill="#fff" stroke="#2a2a2a" stroke-width="1"/><path d="M1 5.500l6 4 6-4" fill="none" stroke="#2a2a2a" stroke-width="1"/><path d="M4.500 3.500h5M4.500 5.500h5" stroke="#222" stroke-width="1"/></svg><svg class="lc" viewBox="0 0 10 14"><rect x="1.300" y="1" width="7.400" height="12.400" rx="3.700" fill="#fff" stroke="#4a4a4a" stroke-width="1.100"/><path d="M3.500 4.300v5.800a1.500 1.500 0 0 0 3 0V3.500" fill="none" stroke="#5a5a5a" stroke-width="1"/></svg><span class="ln">Lobo Mathur</span></div>
<div class="lr" style="top:107.60px"><svg class="le" viewBox="0 0 14 14"><path d="M1 5.500L3 4V1.500h8V4l2 1.500V13H1z" fill="#fff" stroke="#2a2a2a" stroke-width="1"/><path d="M1 5.500l6 4 6-4" fill="none" stroke="#2a2a2a" stroke-width="1"/><path d="M4.500 3.500h5M4.500 5.500h5" stroke="#222" stroke-width="1"/></svg><svg class="lc" viewBox="0 0 10 14"><rect x="1.300" y="1" width="7.400" height="12.400" rx="3.700" fill="#fff" stroke="#4a4a4a" stroke-width="1.100"/><path d="M3.500 4.300v5.800a1.500 1.500 0 0 0 3 0V3.500" fill="none" stroke="#5a5a5a" stroke-width="1"/></svg><span class="ln">Lobo Mathur</span></div>
<div class="lr" style="top:123.64px"><svg class="le" viewBox="0 0 14 14"><path d="M1 5.500L3 4V1.500h8V4l2 1.500V13H1z" fill="#fff" stroke="#2a2a2a" stroke-width="1"/><path d="M1 5.500l6 4 6-4" fill="none" stroke="#2a2a2a" stroke-width="1"/><path d="M4.500 3.500h5M4.500 5.500h5" stroke="#222" stroke-width="1"/></svg><svg class="lc" viewBox="0 0 10 14"><rect x="1.300" y="1" width="7.400" height="12.400" rx="3.700" fill="#fff" stroke="#4a4a4a" stroke-width="1.100"/><path d="M3.500 4.300v5.800a1.500 1.500 0 0 0 3 0V3.500" fill="none" stroke="#5a5a5a" stroke-width="1"/></svg><span class="ln">Lobo Mathur</span></div>
<div class="lr" style="top:139.68px"><svg class="le" viewBox="0 0 14 14"><path d="M1 5.500L3 4V1.500h8V4l2 1.500V13H1z" fill="#fff" stroke="#2a2a2a" stroke-width="1"/><path d="M1 5.500l6 4 6-4" fill="none" stroke="#2a2a2a" stroke-width="1"/><path d="M4.500 3.500h5M4.500 5.500h5" stroke="#222" stroke-width="1"/></svg><svg class="lc" viewBox="0 0 10 14"><rect x="1.300" y="1" width="7.400" height="12.400" rx="3.700" fill="#fff" stroke="#4a4a4a" stroke-width="1.100"/><path d="M3.500 4.300v5.800a1.500 1.500 0 0 0 3 0V3.500" fill="none" stroke="#5a5a5a" stroke-width="1"/></svg><span class="ln">Lobo Mathur</span></div>
<div class="lr" style="top:155.72px"><svg class="le" viewBox="0 0 14 14"><path d="M1 5.500L3 4V1.500h8V4l2 1.500V13H1z" fill="#fff" stroke="#2a2a2a" stroke-width="1"/><path d="M1 5.500l6 4 6-4" fill="none" stroke="#2a2a2a" stroke-width="1"/><path d="M4.500 3.500h5M4.500 5.500h5" stroke="#222" stroke-width="1"/></svg><svg class="lc" viewBox="0 0 10 14"><rect x="1.300" y="1" width="7.400" height="12.400" rx="3.700" fill="#fff" stroke="#4a4a4a" stroke-width="1.100"/><path d="M3.500 4.300v5.800a1.500 1.500 0 0 0 3 0V3.500" fill="none" stroke="#5a5a5a" stroke-width="1"/></svg><span class="ln">Lobo Mathur</span></div>
<div class="lr" style="top:171.76px"><b class="bang">!</b><svg class="le" viewBox="0 0 14 14" style="top:2px"><rect x="1" y="2.500" width="12" height="8.500" fill="#fff" stroke="#222" stroke-width="1.100"/><path d="M1 2.500l6 5 6-5M1 11l4.500-4.500M13 11L8.500 6.500" fill="none" stroke="#222" stroke-width="0.900"/></svg><span class="ln">Lobo Mathur</span></div>
<div class="lr" style="top:187.80px"><svg class="le" viewBox="0 0 14 14"><path d="M1 5.500L3 4V1.500h8V4l2 1.500V13H1z" fill="#fff" stroke="#2a2a2a" stroke-width="1"/><path d="M1 5.500l6 4 6-4" fill="none" stroke="#2a2a2a" stroke-width="1"/><path d="M4.500 3.500h5M4.500 5.500h5" stroke="#222" stroke-width="1"/></svg><svg class="lc" viewBox="0 0 10 14"><rect x="1.300" y="1" width="7.400" height="12.400" rx="3.700" fill="#fff" stroke="#4a4a4a" stroke-width="1.100"/><path d="M3.500 4.300v5.800a1.500 1.500 0 0 0 3 0V3.500" fill="none" stroke="#5a5a5a" stroke-width="1"/></svg><span class="ln">Lobo Mathur</span></div>
<div class="lr" style="top:203.84px"><svg class="le" viewBox="0 0 14 14"><path d="M1 5.500L3 4V1.500h8V4l2 1.500V13H1z" fill="#fff" stroke="#2a2a2a" stroke-width="1"/><path d="M1 5.500l6 4 6-4" fill="none" stroke="#2a2a2a" stroke-width="1"/><path d="M4.500 3.500h5M4.500 5.500h5" stroke="#222" stroke-width="1"/></svg><svg class="lc" viewBox="0 0 10 14"><rect x="1.300" y="1" width="7.400" height="12.400" rx="3.700" fill="#fff" stroke="#4a4a4a" stroke-width="1.100"/><path d="M3.500 4.300v5.800a1.500 1.500 0 0 0 3 0V3.500" fill="none" stroke="#5a5a5a" stroke-width="1"/></svg><span class="ln">Lobo Mathur</span></div>
<div class="lr" style="top:219.88px"><svg class="le" viewBox="0 0 14 14"><path d="M1 5.500L3 4V1.500h8V4l2 1.500V13H1z" fill="#fff" stroke="#2a2a2a" stroke-width="1"/><path d="M1 5.500l6 4 6-4" fill="none" stroke="#2a2a2a" stroke-width="1"/><path d="M4.500 3.500h5M4.500 5.500h5" stroke="#222" stroke-width="1"/></svg><svg class="lc" viewBox="0 0 10 14"><rect x="1.300" y="1" width="7.400" height="12.400" rx="3.700" fill="#fff" stroke="#4a4a4a" stroke-width="1.100"/><path d="M3.500 4.300v5.800a1.500 1.500 0 0 0 3 0V3.500" fill="none" stroke="#5a5a5a" stroke-width="1"/></svg></div>
<div class="lr" style="top:235.92px"><svg class="le" viewBox="0 0 14 14"><path d="M1 5.500L3 4V1.500h8V4l2 1.500V13H1z" fill="#fff" stroke="#2a2a2a" stroke-width="1"/><path d="M1 5.500l6 4 6-4" fill="none" stroke="#2a2a2a" stroke-width="1"/><path d="M4.500 3.500h5M4.500 5.500h5" stroke="#222" stroke-width="1"/></svg><svg class="lc" viewBox="0 0 10 14"><rect x="1.300" y="1" width="7.400" height="12.400" rx="3.700" fill="#fff" stroke="#4a4a4a" stroke-width="1.100"/><path d="M3.500 4.300v5.800a1.500 1.500 0 0 0 3 0V3.500" fill="none" stroke="#5a5a5a" stroke-width="1"/></svg></div>
<div class="lr" style="top:251.96px"><svg class="le" viewBox="0 0 14 14"><path d="M1 5.500L3 4V1.500h8V4l2 1.500V13H1z" fill="#fff" stroke="#2a2a2a" stroke-width="1"/><path d="M1 5.500l6 4 6-4" fill="none" stroke="#2a2a2a" stroke-width="1"/><path d="M4.500 3.500h5M4.500 5.500h5" stroke="#222" stroke-width="1"/></svg><svg class="lc" viewBox="0 0 10 14"><rect x="1.300" y="1" width="7.400" height="12.400" rx="3.700" fill="#fff" stroke="#4a4a4a" stroke-width="1.100"/><path d="M3.500 4.300v5.800a1.500 1.500 0 0 0 3 0V3.500" fill="none" stroke="#5a5a5a" stroke-width="1"/></svg></div>
<div class="lr" style="top:268.00px"><b class="bang">!</b><svg class="le" viewBox="0 0 14 14"><path d="M1 5.500L3 4V1.500h8V4l2 1.500V13H1z" fill="#fff" stroke="#2a2a2a" stroke-width="1"/><path d="M1 5.500l6 4 6-4" fill="none" stroke="#2a2a2a" stroke-width="1"/><path d="M4.500 3.500h5M4.500 5.500h5" stroke="#222" stroke-width="1"/></svg></div>
<div class="lr" style="top:284.04px"><svg class="le" viewBox="0 0 14 14"><path d="M1 5.500L3 4V1.500h8V4l2 1.500V13H1z" fill="#fff" stroke="#2a2a2a" stroke-width="1"/><path d="M1 5.500l6 4 6-4" fill="none" stroke="#2a2a2a" stroke-width="1"/><path d="M4.500 3.500h5M4.500 5.500h5" stroke="#222" stroke-width="1"/></svg><svg class="lc" viewBox="0 0 10 14"><rect x="1.300" y="1" width="7.400" height="12.400" rx="3.700" fill="#fff" stroke="#4a4a4a" stroke-width="1.100"/><path d="M3.500 4.300v5.800a1.500 1.500 0 0 0 3 0V3.500" fill="none" stroke="#5a5a5a" stroke-width="1"/></svg></div>
<div class="lr" style="top:300.08px"><svg class="le" viewBox="0 0 14 14"><path d="M1 5.500L3 4V1.500h8V4l2 1.500V13H1z" fill="#fff" stroke="#2a2a2a" stroke-width="1"/><path d="M1 5.500l6 4 6-4" fill="none" stroke="#2a2a2a" stroke-width="1"/><path d="M4.500 3.500h5M4.500 5.500h5" stroke="#222" stroke-width="1"/></svg><svg class="lc" viewBox="0 0 10 14"><rect x="1.300" y="1" width="7.400" height="12.400" rx="3.700" fill="#fff" stroke="#4a4a4a" stroke-width="1.100"/><path d="M3.500 4.300v5.800a1.500 1.500 0 0 0 3 0V3.500" fill="none" stroke="#5a5a5a" stroke-width="1"/></svg></div>
<div class="lr" style="top:316.12px"><svg class="le" viewBox="0 0 14 14"><path d="M1 5.500L3 4V1.500h8V4l2 1.500V13H1z" fill="#fff" stroke="#2a2a2a" stroke-width="1"/><path d="M1 5.500l6 4 6-4" fill="none" stroke="#2a2a2a" stroke-width="1"/><path d="M4.500 3.500h5M4.500 5.500h5" stroke="#222" stroke-width="1"/></svg><svg class="lc" viewBox="0 0 10 14"><rect x="1.300" y="1" width="7.400" height="12.400" rx="3.700" fill="#fff" stroke="#4a4a4a" stroke-width="1.100"/><path d="M3.500 4.300v5.800a1.500 1.500 0 0 0 3 0V3.500" fill="none" stroke="#5a5a5a" stroke-width="1"/></svg></div>
<div class="lr" style="top:332.16px"><svg class="le" viewBox="0 0 14 14"><path d="M1 5.500L3 4V1.500h8V4l2 1.500V13H1z" fill="#fff" stroke="#2a2a2a" stroke-width="1"/><path d="M1 5.500l6 4 6-4" fill="none" stroke="#2a2a2a" stroke-width="1"/><path d="M4.500 3.500h5M4.500 5.500h5" stroke="#222" stroke-width="1"/></svg><svg class="lc" viewBox="0 0 10 14"><rect x="1.300" y="1" width="7.400" height="12.400" rx="3.700" fill="#fff" stroke="#4a4a4a" stroke-width="1.100"/><path d="M3.500 4.300v5.800a1.500 1.500 0 0 0 3 0V3.500" fill="none" stroke="#5a5a5a" stroke-width="1"/></svg><span class="ln">Lobo Mathur</span></div>
<div class="lr" style="top:348.20px"><svg class="le" viewBox="0 0 14 14"><path d="M1 5.500L3 4V1.500h8V4l2 1.500V13H1z" fill="#fff" stroke="#2a2a2a" stroke-width="1"/><path d="M1 5.500l6 4 6-4" fill="none" stroke="#2a2a2a" stroke-width="1"/><path d="M4.500 3.500h5M4.500 5.500h5" stroke="#222" stroke-width="1"/></svg><svg class="lc" viewBox="0 0 10 14"><rect x="1.300" y="1" width="7.400" height="12.400" rx="3.700" fill="#fff" stroke="#4a4a4a" stroke-width="1.100"/><path d="M3.500 4.300v5.800a1.500 1.500 0 0 0 3 0V3.500" fill="none" stroke="#5a5a5a" stroke-width="1"/></svg><span class="ln">Lobo Mathur</span></div>
<div class="lr" style="top:364.24px"><svg class="le" viewBox="0 0 14 14"><path d="M1 5.500L3 4V1.500h8V4l2 1.500V13H1z" fill="#fff" stroke="#2a2a2a" stroke-width="1"/><path d="M1 5.500l6 4 6-4" fill="none" stroke="#2a2a2a" stroke-width="1"/><path d="M4.500 3.500h5M4.500 5.500h5" stroke="#222" stroke-width="1"/></svg><svg class="lc" viewBox="0 0 10 14"><rect x="1.300" y="1" width="7.400" height="12.400" rx="3.700" fill="#fff" stroke="#4a4a4a" stroke-width="1.100"/><path d="M3.500 4.300v5.800a1.500 1.500 0 0 0 3 0V3.500" fill="none" stroke="#5a5a5a" stroke-width="1"/></svg><span class="ln">Lobo Mathur</span></div>
<div class="lr" style="top:380.28px"><b class="bang">!</b><svg class="le" viewBox="0 0 14 14" style="top:2px"><rect x="1" y="2.500" width="12" height="8.500" fill="#fff" stroke="#222" stroke-width="1.100"/><path d="M1 2.500l6 5 6-5M1 11l4.500-4.500M13 11L8.500 6.500" fill="none" stroke="#222" stroke-width="0.900"/></svg><span class="ln">Lobo Mathur</span></div>
<div class="lr" style="top:396.32px"><svg class="le" viewBox="0 0 14 14"><path d="M1 5.500L3 4V1.500h8V4l2 1.500V13H1z" fill="#fff" stroke="#2a2a2a" stroke-width="1"/><path d="M1 5.500l6 4 6-4" fill="none" stroke="#2a2a2a" stroke-width="1"/><path d="M4.500 3.500h5M4.500 5.500h5" stroke="#222" stroke-width="1"/></svg><svg class="lc" viewBox="0 0 10 14"><rect x="1.300" y="1" width="7.400" height="12.400" rx="3.700" fill="#fff" stroke="#4a4a4a" stroke-width="1.100"/><path d="M3.500 4.300v5.800a1.500 1.500 0 0 0 3 0V3.500" fill="none" stroke="#5a5a5a" stroke-width="1"/></svg><span class="ln">Lobo Mathur</span></div>
<div class="lr" style="top:412.36px"><svg class="le" viewBox="0 0 14 14"><path d="M1 5.500L3 4V1.500h8V4l2 1.500V13H1z" fill="#fff" stroke="#2a2a2a" stroke-width="1"/><path d="M1 5.500l6 4 6-4" fill="none" stroke="#2a2a2a" stroke-width="1"/><path d="M4.500 3.500h5M4.500 5.500h5" stroke="#222" stroke-width="1"/></svg><svg class="lc" viewBox="0 0 10 14"><rect x="1.300" y="1" width="7.400" height="12.400" rx="3.700" fill="#fff" stroke="#4a4a4a" stroke-width="1.100"/><path d="M3.500 4.300v5.800a1.500 1.500 0 0 0 3 0V3.500" fill="none" stroke="#5a5a5a" stroke-width="1"/></svg><span class="ln">Lobo Mathur</span></div>
<div class="lr" style="top:428.40px"><svg class="le" viewBox="0 0 14 14"><path d="M1 5.500L3 4V1.500h8V4l2 1.500V13H1z" fill="#fff" stroke="#2a2a2a" stroke-width="1"/><path d="M1 5.500l6 4 6-4" fill="none" stroke="#2a2a2a" stroke-width="1"/><path d="M4.500 3.500h5M4.500 5.500h5" stroke="#222" stroke-width="1"/></svg><svg class="lc" viewBox="0 0 10 14"><rect x="1.300" y="1" width="7.400" height="12.400" rx="3.700" fill="#fff" stroke="#4a4a4a" stroke-width="1.100"/><path d="M3.500 4.300v5.800a1.500 1.500 0 0 0 3 0V3.500" fill="none" stroke="#5a5a5a" stroke-width="1"/></svg><span class="ln">Lobo Mathur</span></div>
<div class="lr" style="top:444.44px"><svg class="le" viewBox="0 0 14 14"><path d="M1 5.500L3 4V1.500h8V4l2 1.500V13H1z" fill="#fff" stroke="#2a2a2a" stroke-width="1"/><path d="M1 5.500l6 4 6-4" fill="none" stroke="#2a2a2a" stroke-width="1"/><path d="M4.500 3.500h5M4.500 5.500h5" stroke="#222" stroke-width="1"/></svg><svg class="lc" viewBox="0 0 10 14"><rect x="1.300" y="1" width="7.400" height="12.400" rx="3.700" fill="#fff" stroke="#4a4a4a" stroke-width="1.100"/><path d="M3.500 4.300v5.800a1.500 1.500 0 0 0 3 0V3.500" fill="none" stroke="#5a5a5a" stroke-width="1"/></svg><span class="ln">Lobo Mathur</span></div>
<div class="lr" style="top:460.48px"><svg class="le" viewBox="0 0 14 14"><path d="M1 5.500L3 4V1.500h8V4l2 1.500V13H1z" fill="#fff" stroke="#2a2a2a" stroke-width="1"/><path d="M1 5.500l6 4 6-4" fill="none" stroke="#2a2a2a" stroke-width="1"/><path d="M4.500 3.500h5M4.500 5.500h5" stroke="#222" stroke-width="1"/></svg><svg class="lc" viewBox="0 0 10 14"><rect x="1.300" y="1" width="7.400" height="12.400" rx="3.700" fill="#fff" stroke="#4a4a4a" stroke-width="1.100"/><path d="M3.500 4.300v5.800a1.500 1.500 0 0 0 3 0V3.500" fill="none" stroke="#5a5a5a" stroke-width="1"/></svg><span class="ln">Lobo Mathur</span></div>
<div class="lr" style="top:476.52px"><svg class="le" viewBox="0 0 14 14"><path d="M1 5.500L3 4V1.500h8V4l2 1.500V13H1z" fill="#fff" stroke="#2a2a2a" stroke-width="1"/><path d="M1 5.500l6 4 6-4" fill="none" stroke="#2a2a2a" stroke-width="1"/><path d="M4.500 3.500h5M4.500 5.500h5" stroke="#222" stroke-width="1"/></svg><svg class="lc" viewBox="0 0 10 14"><rect x="1.300" y="1" width="7.400" height="12.400" rx="3.700" fill="#fff" stroke="#4a4a4a" stroke-width="1.100"/><path d="M3.500 4.300v5.800a1.500 1.500 0 0 0 3 0V3.500" fill="none" stroke="#5a5a5a" stroke-width="1"/></svg><span class="ln">Lobo Mathur</span></div>
<div class="lr" style="top:492.56px"><svg class="le" viewBox="0 0 14 14"><path d="M1 5.500L3 4V1.500h8V4l2 1.500V13H1z" fill="#fff" stroke="#2a2a2a" stroke-width="1"/><path d="M1 5.500l6 4 6-4" fill="none" stroke="#2a2a2a" stroke-width="1"/><path d="M4.500 3.500h5M4.500 5.500h5" stroke="#222" stroke-width="1"/></svg><svg class="lc" viewBox="0 0 10 14"><rect x="1.300" y="1" width="7.400" height="12.400" rx="3.700" fill="#fff" stroke="#4a4a4a" stroke-width="1.100"/><path d="M3.500 4.300v5.800a1.500 1.500 0 0 0 3 0V3.500" fill="none" stroke="#5a5a5a" stroke-width="1"/></svg><span class="ln">Lobo Mathur</span></div>
  <div id="lhdr">
    <i style="left:38px"></i><i style="left:76px"></i><i style="left:113px"></i><i style="left:151px"></i>
    <!-- trash -->
    <svg class="abs" style="left:16px;top:3px" width="11" height="12" viewBox="0 0 11 12"><path d="M0.500 3h10M3.500 2.500V1h4v1.500" fill="none" stroke="#222" stroke-width="1.200"/><path d="M1.500 4.500h8v6.500h-8z" fill="none" stroke="#222" stroke-width="1.200"/><path d="M3.500 6v3.500M5.500 6v3.500M7.500 6v3.500" stroke="#222" stroke-width="1"/></svg>
    <b class="abs" style="left:56px;top:1px;font-size:13px;line-height:15px;color:#111">!</b>
    <!-- page -->
    <svg class="abs" style="left:92px;top:3px" width="10" height="12" viewBox="0 0 10 12"><path d="M1 1h5l3 3v7H1z" fill="#fff" stroke="#222" stroke-width="1.300"/><path d="M6 1v3h3" fill="none" stroke="#222" stroke-width="1"/></svg>
    <!-- clip -->
    <svg class="abs" style="left:130px;top:3px" width="8" height="12" viewBox="0 0 8 12"><path d="M1.500 4v4.500a2.500 2.500 0 0 0 5 0V3a1.800 1.800 0 0 0-3.600 0v5.200" fill="none" stroke="#111" stroke-width="1.500"/></svg>
    <span class="abs" style="left:156px;top:2.500px;font-size:11px;line-height:15px;color:#111;transform:scaleX(.9);transform-origin:0 0;-webkit-text-stroke:.15px">From</span>
  </div>
  <div id="lsearch">
    <i style="left:38px"></i><i style="left:76px"></i><i style="left:113px"></i><i style="left:151px"></i>
    <span class="abs" style="left:156px;top:1px;font-size:11px;line-height:15px;color:#8a8a8a;transform:scaleX(.9);transform-origin:0 0">&lt;Search&gt;</span>
    <svg class="abs" style="left:226px;top:1px" width="16" height="16" viewBox="0 0 16 16"><circle cx="9.500" cy="6" r="4.500" fill="#fff" stroke="#5a78b0" stroke-width="1.200"/><path d="M6.300 9.500L1.500 14.500" stroke="#3d5c9a" stroke-width="1.800"/></svg>
  </div>
  <div id="lvs">
    <div class="b" style="top:0;height:18px"><i class="tri" style="left:3px;top:5px;border-width:0 4px 4.500px 4px;border-bottom-color:#6a6a6a"></i><i class="abs"></i></div>
    <div class="th"></div>
    <div class="b" style="top:469px;height:16px"><i class="tri" style="left:3px;top:5px;border-width:4.500px 4px 0 4px;border-top-color:#6a6a6a"></i></div>
  </div>
  <div id="lhs">
    <div class="b" style="left:0"><i class="tri" style="left:4px;top:3px;border-width:4px 4.500px 4px 0;border-right-color:#6a6a6a"></i></div>
    <div class="th"></div>
    <div class="b" style="left:227px"><i class="tri" style="left:5px;top:3px;border-width:4px 0 4px 4.500px;border-left-color:#6a6a6a"></i></div>
  </div>
</div>
<!-- splitter list/preview -->
<div class="abs" style="left:496px;top:161px;width:3px;height:502px;background:#f2f2f2"></div>
<div class="abs" style="left:499px;top:661px;width:781px;height:2px;background:#f4f4f4"></div>

<!-- ===== preview ===== -->
<div id="pv">
  <div class="lbl" style="top:10px">Subject:</div><div class="val" style="top:10px">Junk E-mail Rule</div>
  <div class="lbl" style="top:37px">From:</div>
  <div class="lbl" style="top:61px">To:</div>
  <div id="pvdiv"></div>
  <div id="pvl"></div>
  <!-- small scrollbars -->
  <div class="abs" style="left:772px;top:11px;width:8px;height:74px;background:#f0f0f0"></div>
  <svg class="abs" style="left:772px;top:11px" width="8" height="74" viewBox="0 0 8 74">
    <path d="M8 3.500l-4.500 6.500M3.500 14.500L8 21M8 28l-4.500 6.500M3.500 39L8 45.500M8 52.500l-4.500 6.500M3.500 63.500L8 70" fill="none" stroke="#b4b4b4" stroke-width="1.400"/>
    <path d="M0 24.500h8M0 49h8" stroke="#fff" stroke-width="1"/>
  </svg>
  <div class="abs" style="left:769px;top:176px;width:11px;height:326px;background:#fbfbfb"></div>
  <svg class="abs" style="left:771px;top:190px" width="13" height="9" viewBox="0 0 13 9"><path d="M1 7l5-5 5 5" fill="none" stroke="#b0b0b0" stroke-width="1.500"/></svg>
  <svg class="abs" style="left:771px;top:477px" width="13" height="9" viewBox="0 0 13 9"><path d="M1 1.500l5 5 5-5" fill="none" stroke="#b0b0b0" stroke-width="1.500"/></svg>
  <div class="abs" style="left:780px;top:0;width:1px;height:502px;background:#6a6a6a"></div>
</div>

<!-- ===== status bar ===== -->
<div id="status">
  <svg class="abs" style="left:1167px;top:3px" width="15" height="16" viewBox="0 0 15 16"><path d="M0.700 0.700h11.500l2 2v12.600H0.700z" fill="#fff" stroke="#333" stroke-width="1.200"/><path d="M3.500 0.700v4h7.500v-4M9 1.500v2" fill="none" stroke="#333" stroke-width="1"/><rect x="2" y="8.500" width="10.500" height="6.500" fill="#4d97d8"/><path d="M4 11h6.500M4 13h6.500" stroke="#b9dbf5" stroke-width="1"/></svg>
  <div class="t">Save Converted File</div>
</div>

<!-- window left border -->
<div class="abs" style="left:0;top:48px;width:1px;height:637px;background:#6a6a6a"></div>
<div class="abs" style="left:0;top:0;width:1px;height:48px;background:#8094b4"></div>
<div class="abs" style="left:1279px;top:0;width:1px;height:48px;background:#6f86ad"></div>
<div class="abs" style="left:1279px;top:48px;width:1px;height:637px;background:#6a6a6a"></div>

<!-- ===== dialog ===== -->
<div id="dlg">
  <div class="tb"><div class="t">Select Destination</div>
    <svg class="x" viewBox="0 0 9 9"><path d="M1 1l7 7M8 1L1 8" stroke="#fff" stroke-width="1.400"/></svg>
  </div>
  <div class="dt" style="left:17px;top:38px">Select the destination path :</div>
  <div class="abs" style="left:17px;top:65px;width:362px;height:21px;border:1px solid #dcdcdc;background:#f0f0f0"></div>
  <div class="dt" style="left:22px;top:68px;color:#444;transform:scaleX(.96)">E:\Confidential\22-23\File\</div>
  <div class="btn" style="left:391px;top:65px;width:76px;height:23px"><span>Browse</span></div>
  <div class="dsep" style="top:107px"></div>
  <div class="dcb" style="left:18px;top:126px"><svg width="9" height="9" viewBox="0 0 9 9" style="display:block"><path d="M1.500 4.500l2 2 4-4.500" fill="none" stroke="#555" stroke-width="1.100"/></svg></div>
  <div class="dt" style="left:31px;top:125px">Recover Deleted Items</div>
  <svg class="info" style="left:176px;top:124px" viewBox="0 0 16 16"><circle cx="8" cy="8" r="6.700" fill="#fff" stroke="#2b86d9" stroke-width="1.500"/><path d="M8 7v4.500" stroke="#2b86d9" stroke-width="1.800"/><circle cx="8" cy="4.700" r="1" fill="#2b86d9"/></svg>
  <div class="dcb" style="left:262px;top:126px"><svg width="9" height="9" viewBox="0 0 9 9" style="display:block"><path d="M1.500 4.500l2 2 4-4.500" fill="none" stroke="#555" stroke-width="1.100"/></svg></div>
  <div class="dt" style="left:276px;top:125px">Auto split PST file</div>
  <svg class="info" style="left:402px;top:124px" viewBox="0 0 16 16"><circle cx="8" cy="8" r="6.700" fill="#fff" stroke="#2b86d9" stroke-width="1.500"/><path d="M8 7v4.500" stroke="#2b86d9" stroke-width="1.800"/><circle cx="8" cy="4.700" r="1" fill="#2b86d9"/></svg>
  <div class="dsep" style="top:159px"></div>
  <div class="dt" style="left:20px;top:175px;color:#2468cc;text-decoration:underline">Apply Advance Filter</div>
  <div class="btn" style="left:391px;top:175px;width:76px;height:23px;border:1px solid #3a74bc;box-shadow:inset 0 0 0 1px rgba(58,116,188,.45);line-height:20px"><span>OK</span></div>
</div>

</div>
</body>
</html>
